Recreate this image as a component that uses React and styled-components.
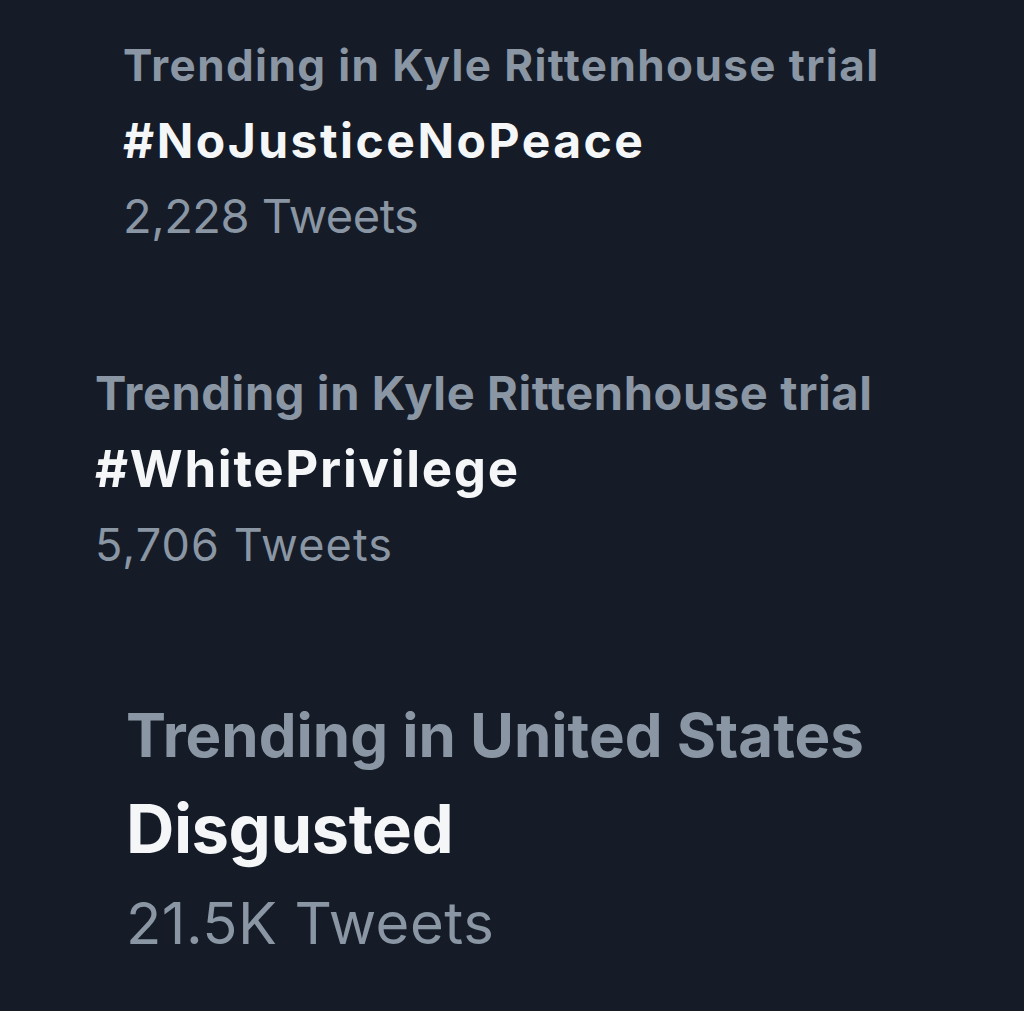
import React from "react";
import styled, { createGlobalStyle } from "styled-components";

const Global = createGlobalStyle`
  html, body { margin: 0; padding: 0; background: #151c28; }
  body { font-family: Inter, Roboto, "Liberation Sans", sans-serif; }
`;

const Page = styled.div`
  width: 1024px;
  height: 1011px;
  background: #151c28;
  overflow: hidden;
  display: flex;
  flex-direction: column;
`;

const Trend = styled.div`
  display: flex;
  flex-direction: column;
  padding-left: ${(p) => p.$indent}px;
  margin-top: ${(p) => p.$top}px;
  line-height: ${(p) => p.$lh}px;
`;

const Label = styled.div`
  color: #8a96a3;
  font-weight: 700;
  font-size: ${(p) => p.$size}px;
  letter-spacing: ${(p) => p.$ls}px;
  white-space: nowrap;
`;

const Title = styled.div`
  color: #f4f6f7;
  font-weight: 700;
  font-size: ${(p) => p.$size}px;
  letter-spacing: ${(p) => p.$ls}px;
  white-space: nowrap;
`;

const Count = styled.div`
  color: #8a96a3;
  font-weight: 400;
  font-size: ${(p) => p.$size}px;
  letter-spacing: ${(p) => p.$ls}px;
  white-space: nowrap;
`;

const trends = [
  {
    label: "Trending in Kyle Rittenhouse trial", title: "#NoJusticeNoPeace", count: "2,228 Tweets",
    indent: 123, top: 28, lh: 75,
    label_: [44, 1.4], title_: [48, 2.5], count_: [47, -0.5],
  },
  {
    label: "Trending in Kyle Rittenhouse trial", title: "#WhitePrivilege", count: "5,706 Tweets",
    indent: 95, top: 102, lh: 76,
    label_: [47, 0.6], title_: [51, 1.7], count_: [45, 1.1],
  },
  {
    label: "Trending in United States", title: "Disgusted", count: "21.5K Tweets",
    indent: 126, top: 105, lh: 94,
    label_: [60, 0], title_: [67, -0.5], count_: [58, 0.5],
  },
];

export default function App() {
  return (
    <Page>
      <Global />
      {trends.map((t, i) => (
        <Trend key={i} $indent={t.indent} $top={t.top} $lh={t.lh}>
          <Label $size={t.label_[0]} $ls={t.label_[1]}>{t.label}</Label>
          <Title $size={t.title_[0]} $ls={t.title_[1]}>{t.title}</Title>
          <Count $size={t.count_[0]} $ls={t.count_[1]}>{t.count}</Count>
        </Trend>
      ))}
    </Page>
  );
}
